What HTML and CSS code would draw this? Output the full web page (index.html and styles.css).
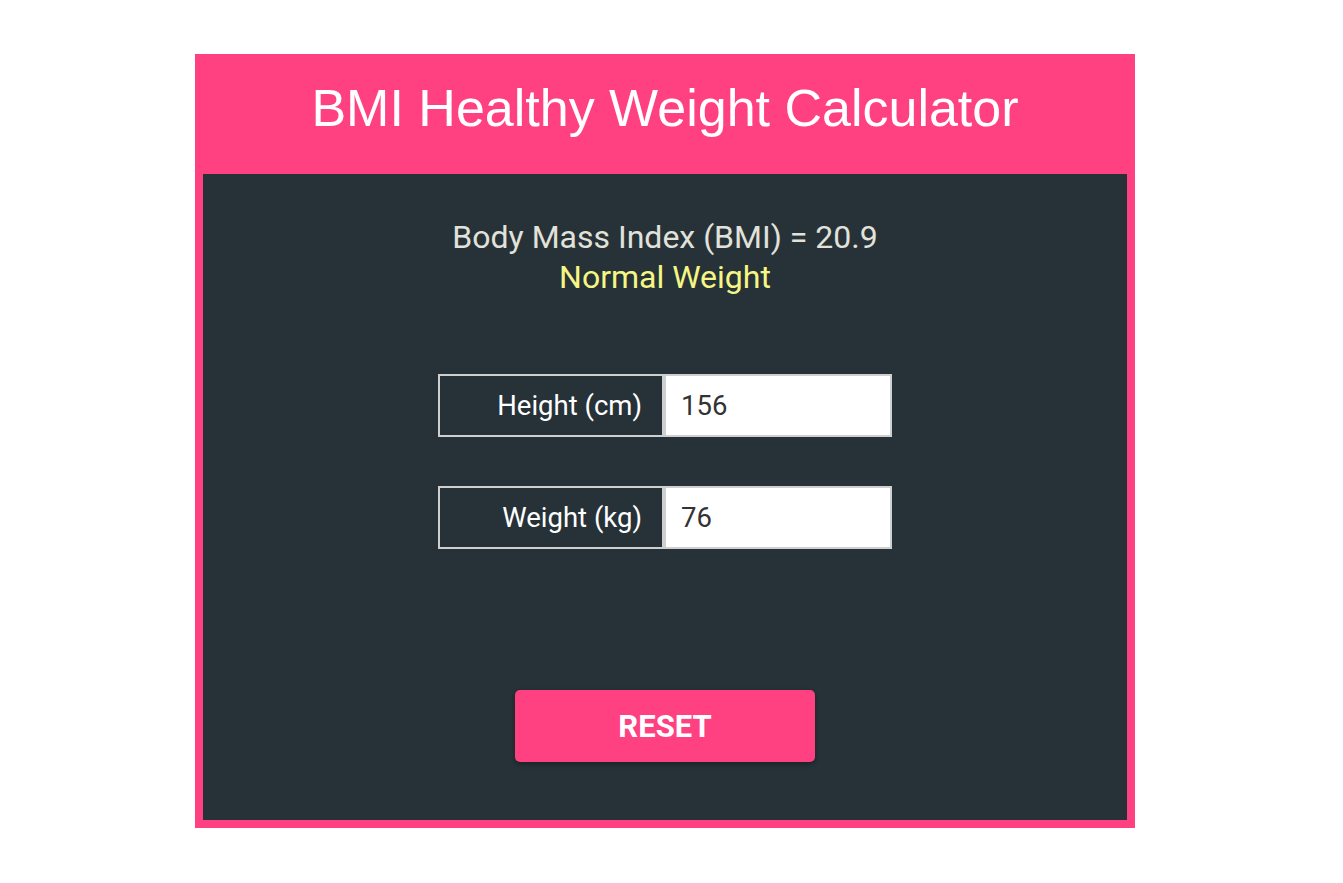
FILE: index.html
```html
<!DOCTYPE html>
<html>
<head>
<meta charset="utf-8">
<link rel="stylesheet" href="styles.css">
</head>
<body>
<div class="page">
  <div class="card">
    <h1 class="title">BMI Healthy Weight Calculator</h1>
    <div class="panel">
      <div class="result">
        <div class="bmi">Body Mass Index (BMI) = 20.9</div>
        <div class="category">Normal Weight</div>
      </div>
      <div class="fields">
        <div class="field">
          <label class="label">Height (cm)</label>
          <div class="input">156</div>
        </div>
        <div class="field">
          <label class="label">Weight (kg)</label>
          <div class="input">76</div>
        </div>
      </div>
      <button class="reset">RESET</button>
    </div>
  </div>
</div>
</body>
</html>
```
FILE: styles.css
```css
html, body {
  margin: 0;
  padding: 0;
  background: #ffffff;
}
.page {
  padding: 54px 0 0 195px;
}
.card {
  width: 924px;
  background: #ff4081;
  border: 8px solid #ff4081;
  border-top-width: 0;
}
.title {
  margin: 0;
  height: 120px;
  box-sizing: border-box;
  padding-top: 24px;
  font-family: "Liberation Sans", Arial, sans-serif;
  font-weight: normal;
  font-size: 52px;
  line-height: 60px;
  color: #ffffff;
  text-align: center;
}
.panel {
  background: #263238;
  height: 646px;
  box-sizing: border-box;
  display: flex;
  flex-direction: column;
  align-items: center;
  padding-top: 43px;
  font-family: Roboto, "Noto Sans", sans-serif;
}
.result {
  text-align: center;
  font-size: 32px;
  font-weight: 400;
  line-height: 40px;
}
.bmi {
  color: #e2e2da;
}
.category {
  color: #f6f684;
}
.fields {
  margin-top: 77px;
  display: flex;
  flex-direction: column;
  gap: 49px;
}
.field {
  display: flex;
  width: 454px;
  height: 63px;
}
.label {
  width: 225px;
  box-sizing: border-box;
  border: 2px solid #cfcfcf;
  border-right-width: 1px;
  color: #ffffff;
  font-size: 27.5px;
  padding-right: 20px;
  display: flex;
  align-items: center;
  justify-content: flex-end;
}
.input {
  flex: 1;
  box-sizing: border-box;
  background: #ffffff;
  border: 2px solid #cfcfcf;
  border-left-width: 3px;
  color: #333333;
  font-size: 27.5px;
  padding-left: 15px;
  display: flex;
  align-items: center;
}
.reset {
  margin-top: 141px;
  width: 300px;
  height: 72px;
  border: none;
  border-radius: 5px;
  background: #ff4081;
  color: #ffffff;
  font-family: Roboto, "Noto Sans", sans-serif;
  font-weight: bold;
  font-size: 31px;
  box-shadow: 0 2px 5px rgba(0, 0, 0, 0.35);
}
```
